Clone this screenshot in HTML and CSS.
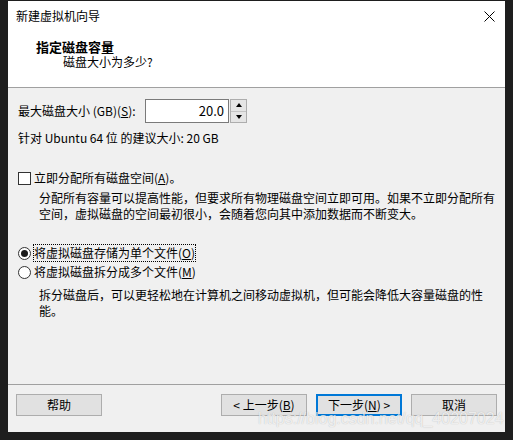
FILE: index.html
```html
<!DOCTYPE html>
<html lang="zh-CN">
<head>
<meta charset="utf-8">
<title>新建虚拟机向导</title>
<link rel="stylesheet" href="styles.css">
</head>
<body>
<div class="window">
  <div class="header">
    <div class="titlebar">
      <span class="title">新建虚拟机向导</span>
      <svg class="close" width="11" height="11" viewBox="0 0 11 11"><path d="M0.5 0.5 L10.5 10.5 M10.5 0.5 L0.5 10.5" stroke="#000" stroke-width="1" fill="none"/></svg>
    </div>
    <div class="heading">指定磁盘容量</div>
    <div class="subheading">磁盘大小为多少?</div>
  </div>
  <div class="body">
    <div class="spin-row">
      <label class="spin-label">最大磁盘大小 (GB)(<u>S</u>):</label>
      <div class="spin-input">20.0</div>
      <div class="spinner">
        <div class="spin-btn"><span class="arrow-up"></span></div>
        <div class="spin-btn"><span class="arrow-down"></span></div>
      </div>
    </div>
    <div class="rec">针对 Ubuntu 64 位 的建议大小: 20 GB</div>
    <div class="check-row">
      <span class="checkbox"></span>
      <span>立即分配所有磁盘空间(<u>A</u>)。</span>
    </div>
    <div class="desc desc1">分配所有容量可以提高性能，但要求所有物理磁盘空间立即可用。如果不立即分配所有空间，虚拟磁盘的空间最初很小，会随着您向其中添加数据而不断变大。</div>
    <div class="radio-row radio1">
      <span class="radio checked"><span class="dot"></span></span>
      <span class="focus">将虚拟磁盘存储为单个文件(<u>O</u>)</span>
    </div>
    <div class="radio-row radio2">
      <span class="radio"></span>
      <span>将虚拟磁盘拆分成多个文件(<u>M</u>)</span>
    </div>
    <div class="desc desc2">拆分磁盘后，可以更轻松地在计算机之间移动虚拟机，但可能会降低大容量磁盘的性能。</div>
  </div>
  <div class="footer">
    <button class="btn">帮助</button>
    <div class="spacer"></div>
    <button class="btn">&lt; 上一步(<u>B</u>)</button>
    <button class="btn primary">下一步(<u>N</u>) &gt;</button>
    <button class="btn">取消</button>
  </div>
  <div class="watermark">https://blog.csdn.net/qq_40207024</div>
</div>
</body>
</html>
```

FILE: styles.css
```css
html, body {
  margin: 0;
  padding: 0;
  background: #1e1e1e;
}
body {
  width: 513px;
  height: 440px;
  overflow: hidden;
  font-family: "Noto Sans CJK SC", "Noto Sans", sans-serif;
  font-size: 12px;
  color: #000;
}
.window {
  position: relative;
  margin: 1px 0 0 8px;
  width: 497px;
  height: 431px;
  background: #f0f0f0;
  display: flex;
  flex-direction: column;
}
.header {
  background: #fff;
  height: 86px;
  border-bottom: 1px solid #a0a0a0;
  box-sizing: content-box;
}
.titlebar {
  height: 30px;
  display: flex;
  align-items: center;
  justify-content: space-between;
  padding: 0 10px 0 8px;
}
.title {
  font-size: 12px;
  line-height: 30px;
  color: #000;
}
.close {
  display: block;
}
.heading {
  margin-top: 8px;
  padding-left: 28px;
  font-size: 13px;
  font-weight: bold;
  line-height: 15px;
}
.subheading {
  padding-left: 55px;
  line-height: 16px;
}
.body {
  flex: 1;
  padding: 11px 10px 0 10px;
}
.spin-row {
  display: flex;
  align-items: center;
  height: 24px;
}
.spin-label {
  width: 127px;
  line-height: 16px;
}
.spin-input {
  width: 78px;
  height: 22px;
  border: 1px solid #7a7a7a;
  background: #fff;
  text-align: right;
  line-height: 22px;
  padding-right: 4px;
  box-sizing: content-box;
  font-size: 13px;
}
.spinner {
  margin-left: 1px;
  width: 17px;
  height: 24px;
  display: flex;
  flex-direction: column;
  border: 1px solid #adadad;
  box-sizing: border-box;
  background: #e5e5e5;
}
.spin-btn {
  flex: 1;
  display: flex;
  align-items: center;
  justify-content: center;
}
.spin-btn + .spin-btn {
  border-top: 1px solid #c4c4c4;
}
.arrow-up {
  width: 0;
  height: 0;
  border-left: 3.5px solid transparent;
  border-right: 3.5px solid transparent;
  border-bottom: 4px solid #000;
}
.arrow-down {
  width: 0;
  height: 0;
  border-left: 3.5px solid transparent;
  border-right: 3.5px solid transparent;
  border-top: 4px solid #000;
}
.rec {
  margin-top: 7px;
  line-height: 16px;
}
.check-row {
  margin-top: 24px;
  display: flex;
  align-items: center;
  height: 16px;
  line-height: 16px;
}
.checkbox {
  width: 13px;
  height: 13px;
  border: 1px solid #333;
  background: #fff;
  box-sizing: border-box;
  margin-right: 3px;
}
.desc {
  padding-left: 21px;
  line-height: 16px;
}
.desc1 {
  margin-top: 4px;
}
.radio-row {
  display: flex;
  align-items: center;
  height: 16px;
  line-height: 16px;
}
.radio1 {
  margin-top: 23px;
}
.radio2 {
  margin-top: 3px;
}
.radio {
  width: 13px;
  height: 13px;
  border: 1px solid #333;
  border-radius: 50%;
  background: #fff;
  box-sizing: border-box;
  margin-right: 3px;
  display: flex;
  align-items: center;
  justify-content: center;
}
.dot {
  width: 7px;
  height: 7px;
  border-radius: 50%;
  background: #1a1a1a;
}
.focus {
  outline: 1px dotted #000;
  outline-offset: 0;
}
.desc2 {
  margin-top: 7px;
}
.footer {
  height: 38px;
  border-top: 1px solid #a0a0a0;
  display: flex;
  align-items: flex-start;
  padding: 9px 8px 0 8px;
  gap: 9px;
  box-sizing: content-box;
}
.spacer {
  flex: 1;
}
.btn {
  width: 86px;
  height: 22px;
  background: #e1e1e1;
  border: 1px solid #adadad;
  font-family: "Noto Sans CJK SC", "Noto Sans", sans-serif;
  font-size: 12px;
  color: #000;
  padding: 0;
  margin: 0;
  line-height: 18px;
}
.btn.primary {
  border: 2px solid #0078d7;
}
.watermark {
  position: absolute;
  left: 250px;
  top: 409px;
  font-family: "Liberation Sans", Arial, sans-serif;
  font-size: 16px;
  color: rgba(255, 255, 255, 0.75);
  text-shadow: 0 0 1px rgba(0, 0, 0, 0.25);
  white-space: nowrap;
  pointer-events: none;
}
```
